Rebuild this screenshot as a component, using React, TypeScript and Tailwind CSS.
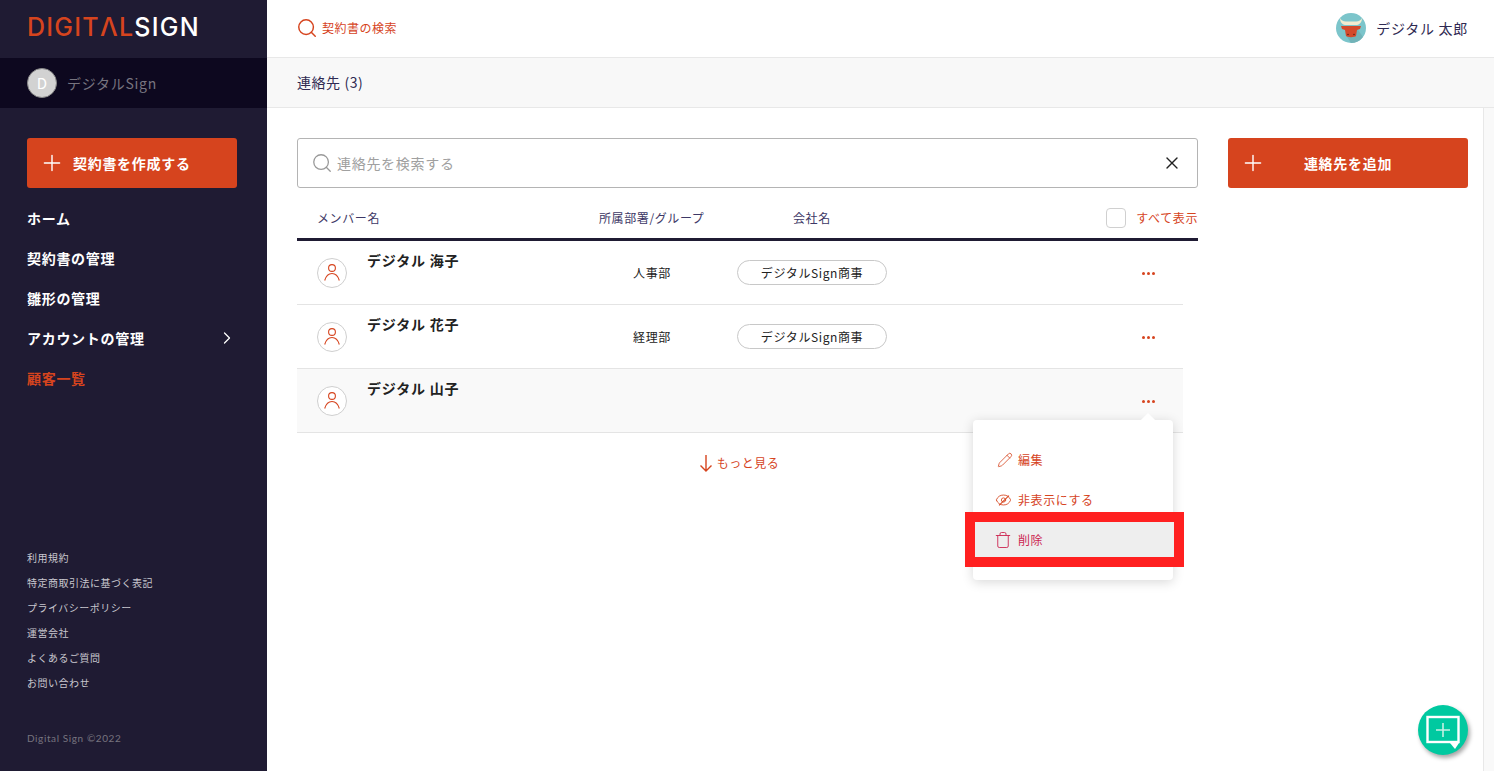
import { ChevronRight, Eye, Pencil, Plus, Search, Trash, X } from "lucide-react";

const font = { fontFamily: '"Noto Sans CJK JP", "Noto Sans", sans-serif' };

const navItems = ["ホーム", "契約書の管理", "雛形の管理", "アカウントの管理"];
const footerLinks = ["利用規約", "特定商取引法に基づく表記", "プライバシーポリシー", "運営会社", "よくあるご質問", "お問い合わせ"];

const contacts = [
  { name: "デジタル 海子", dept: "人事部", company: "デジタルSign商事" },
  { name: "デジタル 花子", dept: "経理部", company: "デジタルSign商事" },
  { name: "デジタル 山子", dept: "", company: "" },
];

const Dots = () => (
  <div className="flex gap-[2px]">
    <span className="w-[3px] h-[3px] rounded-full bg-[#d6441e]" />
    <span className="w-[3px] h-[3px] rounded-full bg-[#d6441e]" />
    <span className="w-[3px] h-[3px] rounded-full bg-[#d6441e]" />
  </div>
);

const PersonIcon = () => (
  <svg viewBox="0 0 30 30" className="w-[30px] h-[30px] shrink-0" fill="none" stroke="#d6441e" strokeWidth="1.100">
    <circle cx="15" cy="10" r="3.400" />
    <path d="M7.700 22.500C9 18 12 15.500 15 15.500s6 2.500 7.300 7" />
  </svg>
);

const BullAvatar = () => (
  <svg viewBox="0 0 30 30" className="w-[30px] h-[30px]">
    <circle cx="15" cy="15" r="15" fill="#7cc5cb" />
    <path d="M15 30a15 15 0 0 0 12-6l-7-10-9 10z" fill="#72b3b8" />
    <path d="M4 5c0 4 2 6.500 5 7h12c3-.5 5-3 5-7-1 2-3 3.500-6 3.500H10C7 8.500 5 7 4 5z" fill="#f3ecd0" />
    <path d="M5 13h20l-1 3-3 1-1 6c-1 1.500-9 1.500-10 0l-1-6-3-1z" fill="#d4492b" />
    <circle cx="12" cy="21.500" r="0.800" fill="#5a2218" />
    <circle cx="18" cy="21.500" r="0.800" fill="#5a2218" />
  </svg>
);

const Popover = () => (
  <div className="absolute right-[10px] top-[51px] w-[200px] h-[160px] bg-white rounded-[4px] shadow-[0_2px_12px_rgba(0,0,0,0.16)] z-10 pt-[20px] text-[12px] tracking-[0.05em] text-[#d6441e]">
    <span className="absolute -top-[5px] right-[20px] w-[10px] h-[10px] rotate-45 bg-white" />
    <div className="h-[40px] flex items-center pl-[24px] gap-[5px]">
      <Pencil size={16} strokeWidth={1.2} />
      <span>編集</span>
    </div>
    <div className="h-[40px] flex items-center pl-[22px] gap-[6px]">
      <span className="relative w-[17px] h-[16px] flex items-center justify-center">
        <Eye size={18} strokeWidth={1.2} />
        <span className="absolute w-[14px] h-px bg-[#d6441e] -rotate-45" />
      </span>
      <span>非表示にする</span>
    </div>
    <div className="absolute left-[-8px] top-[92px] w-[219px] h-[55px] border-[10px] border-[#ff2020] bg-[#eeeeee] flex items-center pl-[19px] gap-[6px] text-[#cc2550]">
      <Trash size={18} strokeWidth={1.2} />
      <span>削除</span>
    </div>
  </div>
);

const ContactRow = ({ contact, last }: { contact: (typeof contacts)[number]; last: boolean }) => (
  <div className={`relative flex h-[64px] border-b border-[#e4e4e4] ${last ? "bg-[#f9f9f9]" : ""}`}>
    <div className="w-[50px] pl-[20px] pt-[17px] box-content">
      <div className="w-[30px] h-[30px] rounded-full border border-[#cfcfcf] bg-white flex items-center justify-center">
        <PersonIcon />
      </div>
    </div>
    <div className="w-[250px] pt-[8px] text-[14px] leading-[22px] font-bold text-[#222] tracking-[0.055em]">{contact.name}</div>
    <div className="w-[110px] text-center text-[12px] tracking-[0.05em] text-[#222] leading-[64px] -ml-[20px]">{contact.dept}</div>
    <div className="w-[150px] ml-[30px] flex items-center">
      {contact.company && (
        <span className="w-full h-[25px] rounded-full border border-[#c8c8c8] bg-white flex items-center justify-center text-[12px] tracking-[0.05em] text-[#222]">
          {contact.company}
        </span>
      )}
    </div>
    <div className="absolute right-[28px] top-[31px]">
      <Dots />
    </div>
    {last && <Popover />}
  </div>
);

export default function App() {
  return (
    <div className="flex h-[771px] w-full overflow-hidden bg-white" style={font}>
      <aside className="w-[267px] shrink-0 bg-[#1f1b33] flex flex-col text-white">
        <div className="h-[58px] pl-[27px] pb-[3px] flex items-center">
          <span className="text-[25px] font-medium tracking-[0.05em] leading-none" style={{ fontFamily: '"Inter", sans-serif' }}>
            <span className="text-[#d6441e]">DIGITΛL</span>
            <span className="text-white">SIGN</span>
          </span>
        </div>
        <div className="h-[50px] bg-[#0d081f] pl-[27px] flex items-center gap-[10px]">
          <div className="w-[30px] h-[30px] rounded-full bg-[#d2d2d2] border border-[#888] flex items-center justify-center text-[15px] text-white">D</div>
          <span className="text-[14px] text-[#77747f] tracking-[0.05em]">デジタルSign</span>
        </div>
        <div className="px-[27px] pt-[30px]">
          <button className="w-[210px] h-[50px] rounded-[3px] bg-[#d6441e] flex items-center pl-[12px] gap-[8px] text-[14px] font-bold tracking-[0.05em]">
            <Plus size={26} strokeWidth={1.3} />
            契約書を作成する
          </button>
        </div>
        <nav className="px-[27px] pt-[10px] text-[14px] font-bold tracking-[0.05em]">
          {navItems.map((item, i) => (
            <div key={item} className="h-[40px] flex items-center justify-between">
              {item}
              {i === 3 && <ChevronRight size={20} strokeWidth={1.5} className="mr-[3px]" />}
            </div>
          ))}
          <div className="h-[40px] flex items-center text-[#d6441e]">顧客一覧</div>
        </nav>
        <div className="mt-auto px-[27px] pb-[20px] text-[10px] tracking-[0.05em] text-[#c9c8cf]">
          {footerLinks.map((link) => (
            <div key={link} className="h-[25px] flex items-center">{link}</div>
          ))}
          <div className="mt-[31px] h-[25px] flex items-center text-[#77747f] tracking-[0.06em]" style={{ fontFamily: '"Lato", sans-serif' }}>
            Digital Sign ©2022
          </div>
        </div>
      </aside>

      <main className="flex-1 flex flex-col relative">
        <header className="h-[58px] border-b border-[#e8e8e8] flex items-center justify-between pl-[29px] pr-[26px] pb-px">
          <div className="flex items-center gap-[4px] text-[12px] tracking-[0.04em] text-[#d6441e]">
            <Search size={22} strokeWidth={1.6} />
            契約書の検索
          </div>
          <div className="flex items-center gap-[10px] text-[14px] text-[#2f2a52] tracking-[0.05em]">
            <BullAvatar />
            デジタル 太郎
          </div>
        </header>
        <div className="h-[50px] bg-[#f8f8f8] border-b border-[#e8e8e8] pl-[30px] flex items-center text-[14px] tracking-[0.04em] text-[#2f2a52]">
          連絡先 (3)
        </div>

        <div className="flex-1 flex">
          <div className="flex-1 flex pl-[30px] pr-[15px] pt-[30px] gap-[30px]">
            <section className="w-[901px]">
              <div className="h-[50px] rounded-[3px] border border-[#b4b4b4] flex items-center pl-[13px] pr-[15px] text-[14px] text-[#a0a0a0] tracking-[0.05em]">
                <Search size={22} strokeWidth={1.4} className="text-[#999] mr-[4px]" />
                <span className="flex-1">連絡先を検索する</span>
                <X size={20} strokeWidth={1.6} className="text-[#222]" />
              </div>
              <div className="h-[53px] border-b-[3px] border-[#1f1b33] flex items-center pt-[10px] text-[12px] tracking-[0.05em] text-[#3d3866]">
                <span className="w-[302px] pl-[20px]">メンバー名</span>
                <span className="w-[194px]">所属部署/グループ</span>
                <span>会社名</span>
                <label className="ml-auto flex items-center gap-[10px] text-[#d6441e]">
                  <span className="w-[20px] h-[20px] rounded-[4px] border border-[#d0d0d0] bg-white" />
                  すべて表示
                </label>
              </div>
              <div className="w-[886px]">
                {contacts.map((contact, i) => (
                  <ContactRow key={contact.name} contact={contact} last={i === 2} />
                ))}
                <div className="h-[60px] flex items-center justify-center gap-[4px] text-[12px] text-[#d6441e] pr-[2px] tracking-[0.04em]">
                  <svg viewBox="0 0 14 18" className="w-[14px] h-[18px]" fill="none" stroke="#d6441e" strokeWidth="1.400">
                    <path d="M7 1v16M1.500 11.500 7 17l5.500-5.500" />
                  </svg>
                  もっと見る
                </div>
              </div>
            </section>
            <button className="w-[240px] h-[50px] rounded-[3px] bg-[#d6441e] text-white flex items-center pl-[12px] text-[14px] font-bold tracking-[0.05em]">
              <Plus size={26} strokeWidth={1.3} />
              <span className="flex-1 text-center pr-[38px]">連絡先を追加</span>
            </button>
          </div>
          <div className="w-[11px] bg-[#f9f9f9] border-l border-[#e8e8e8]" />
        </div>

        <div className="absolute right-[26px] bottom-[16px] w-[50px] h-[50px] rounded-full bg-[#00c9a0] shadow-[2px_3px_4px_rgba(0,0,0,0.35)] flex items-center justify-center">
          <svg viewBox="0 0 36 36" className="w-[36px] h-[36px] overflow-visible" fill="none">
            <rect x="2.500" y="5" width="31" height="25" stroke="#fff" strokeWidth="2.400" />
            <path d="M25 31h9l-4 6z" fill="#fff" />
            <path d="M18 11v14M11 18h14" stroke="#c6f0e4" strokeWidth="1.600" />
          </svg>
        </div>
      </main>
    </div>
  );
}
